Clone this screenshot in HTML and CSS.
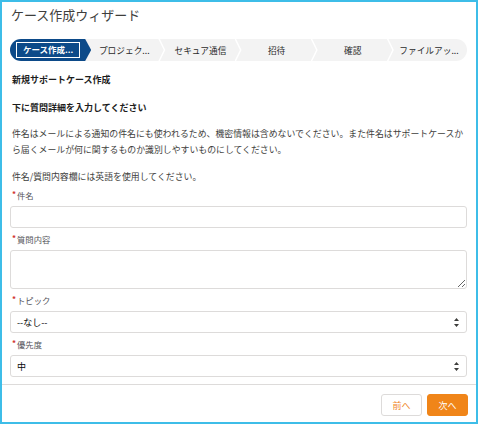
FILE: index.html
```html
<!DOCTYPE html>
<html lang="ja">
<head>
<meta charset="utf-8">
<title>ケース作成ウィザード</title>
<link rel="stylesheet" href="styles.css">
</head>
<body>
<div class="frame">
  <div class="content">
    <h1 class="title">ケース作成ウィザード</h1>
    <nav class="path">
      <div class="step active"><span class="focus">ケース作成...</span></div>
      <div class="step sep">プロジェク...</div>
      <div class="step sep">セキュア通信</div>
      <div class="step sep">招待</div>
      <div class="step sep">確認</div>
      <div class="step">ファイルアッ...</div>
    </nav>
    <h2 class="h1">新規サポートケース作成</h2>
    <h3 class="h2">下に質問詳細を入力してください</h3>
    <p class="para">件名はメールによる通知の件名にも使われるため、機密情報は含めないでください。また件名はサポートケースから届くメールが何に関するものか識別しやすいものにしてください。</p>
    <p class="note">件名/質問内容欄には英語を使用してください。</p>

    <div class="field">
      <label class="label"><abbr class="req">*</abbr>件名</label>
      <input class="input" type="text">
    </div>
    <div class="field">
      <label class="label"><abbr class="req">*</abbr>質問内容</label>
      <textarea class="textarea"></textarea>
    </div>
    <div class="field">
      <label class="label"><abbr class="req">*</abbr>トピック</label>
      <div class="select">
        <span>--なし--</span>
        <svg class="arrows" width="5" height="9" viewBox="0 0 5 9"><path d="M2.5 0L5 3H0z M2.5 9L0 6h5z" fill="#3e3e3c"/></svg>
      </div>
    </div>
    <div class="field">
      <label class="label"><abbr class="req">*</abbr>優先度</label>
      <div class="select">
        <span>中</span>
        <svg class="arrows" width="5" height="9" viewBox="0 0 5 9"><path d="M2.5 0L5 3H0z M2.5 9L0 6h5z" fill="#3e3e3c"/></svg>
      </div>
    </div>
  </div>
  <div class="footer">
    <button class="btn prev">前へ</button>
    <button class="btn next">次へ</button>
  </div>
</div>
</body>
</html>
```

FILE: styles.css
```css
* { box-sizing: border-box; }
html, body { margin: 0; padding: 0; }
body {
  font-family: "Noto Sans CJK JP", "Noto Sans", sans-serif;
  color: #3e3e3c;
  background: #fff;
}
.frame {
  width: 478px;
  height: 424px;
  border: 2px solid #3dbde8;
  display: flex;
  flex-direction: column;
  background: #fff;
}
.content {
  flex: 1;
  padding: 0 9px 0 8px;
}
.title {
  margin: 5px 0 0 1px;
  font-size: 13px;
  line-height: 16px;
  font-weight: normal;
  color: #3e3e3c;
}
.path {
  margin-top: 16px;
  height: 22px;
  display: flex;
  background: #f3f3f3;
  border-radius: 11px;
}
.step {
  flex: 1;
  position: relative;
  display: flex;
  align-items: center;
  justify-content: center;
  font-size: 8.7px;
  color: #2b2b2b;
  white-space: nowrap;
}
.step.sep::after {
  content: "";
  position: absolute;
  right: -4px;
  top: 0;
  width: 8px;
  height: 100%;
  background: #fff;
  z-index: 1;
  clip-path: polygon(0 0, 1.6px 0, 7px 50%, 1.6px 100%, 0 100%, 5.4px 50%);
}
.step.active {
  background: #0c4a89;
  border-radius: 11px 0 0 11px;
  margin-right: -5px;
  padding-right: 5px;
  clip-path: polygon(0 0, calc(100% - 6px) 0, 100% 50%, calc(100% - 6px) 100%, 0 100%);
  color: #fff;
}
.focus {
  display: inline-block;
  border: 1.5px solid #fff;
  padding: 0 6px;
  height: 16px;
  line-height: 13px;
  font-weight: bold;
  color: #fff;
  font-size: 8.5px;
}
.h1, .h2 {
  font-size: 9px;
  line-height: 13px;
  font-weight: bold;
  color: #1d1d1d;
  margin: 0;
  padding-left: 2px;
}
.h1 { margin-top: 12px; }
.h2 { margin-top: 15px; }
.para, .note {
  font-size: 8.9px;
  line-height: 16px;
  margin: 0;
  padding-left: 2px;
  color: #3e3e3c;
}
.para { margin-top: 12px; }
.note { margin-top: 11px; }
.field { margin-top: 4px; }
.field + .field { margin-top: 5px; }
.label {
  display: block;
  font-size: 8.3px;
  line-height: 12px;
  color: #54545a;
  margin-bottom: 4px;
  padding-left: 2px;
}
.req {
  color: #d0312d;
  text-decoration: none;
  border: none;
  font-size: 8px;
  font-weight: bold;
  margin-right: 1px;
  position: relative;
  top: -2px;
}
.input, .textarea, .select {
  display: block;
  width: 100%;
  border: 1px solid #dddbda;
  border-radius: 3px;
  background: #fff;
  font-family: inherit;
  font-size: 9px;
  margin: 0;
}
.input { height: 22px; }
.textarea { height: 39px; resize: vertical; }
.select {
  height: 22px;
  position: relative;
  display: flex;
  align-items: center;
  padding-left: 6px;
  color: #080707;
}
.arrows {
  position: absolute;
  right: 7px;
  top: 6px;
}
.footer {
  border-top: 1px solid #dddbda;
  padding: 9px 8px 6px;
  display: flex;
  justify-content: flex-end;
  gap: 5px;
}
.btn {
  height: 22px;
  width: 41px;
  border-radius: 3px;
  font-family: inherit;
  font-size: 9px;
  padding: 0;
  border: 1px solid #dddbda;
}
.prev { background: #fff; color: #f0872a; }
.next { background: #f08519; border-color: #f08519; color: #fff; }
```
